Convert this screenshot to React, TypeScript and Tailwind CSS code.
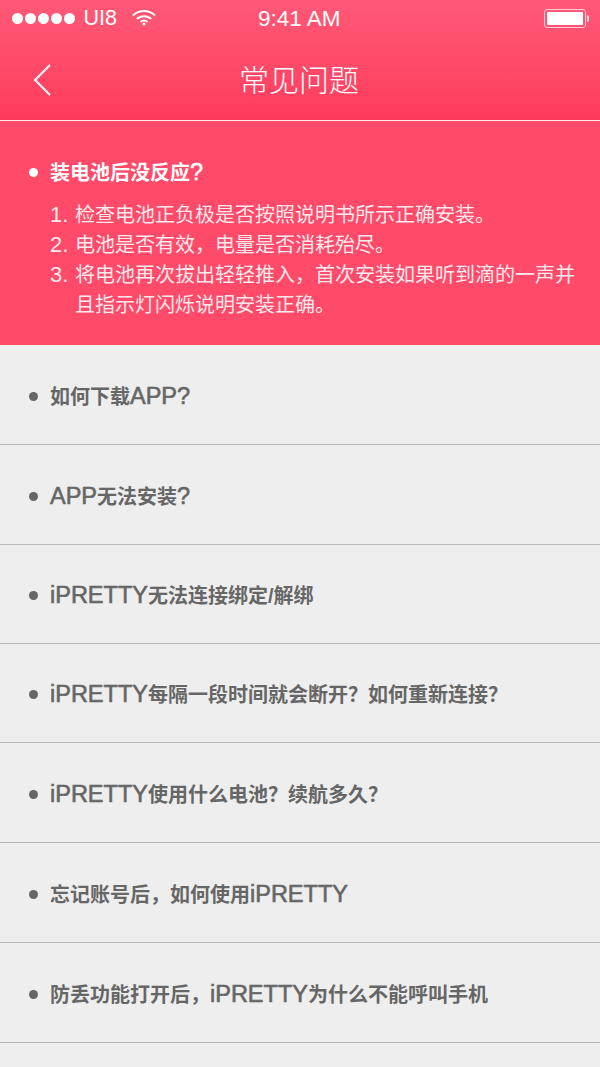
import type { FC } from "react";

const questions = [
  "如何下载APP?",
  "APP无法安装?",
  "iPRETTY无法连接绑定/解绑",
  "iPRETTY每隔一段时间就会断开\uFF1F如何重新连接\uFF1F",
  "iPRETTY使用什么电池\uFF1F续航多久\uFF1F",
  "忘记账号后\uFF0C如何使用iPRETTY",
  "防丢功能打开后\uFF0CiPRETTY为什么不能呼叫手机",
];

const rowHeights = ["h-[100px]", "h-[100px]", "h-[99px]", "h-[99px]", "h-[100px]", "h-[100px]", "h-[100px]"];

// latin runs are set larger than the chinese text in the design
const Mixed: FC<{ text: string }> = ({ text }) => (
  <>
    {text.split(/([A-Za-z?]+)/).map((part, i) =>
      /[A-Za-z?]/.test(part) ? (
        <span key={i} className="text-[23.500px] leading-[28px] font-normal [-webkit-text-stroke:0.6px_#666666]">
          {part}
        </span>
      ) : (
        <span key={i}>{part}</span>
      ),
    )}
  </>
);

const StatusBar: FC = () => (
  <div className="relative flex h-[37px] items-center pl-3 pr-[10px] font-light text-white">
    <div className="flex gap-[2.500px]">
      {[0, 1, 2, 3, 4].map((i) => (
        <span key={i} className="h-[10.500px] w-[10.500px] rounded-full bg-white" />
      ))}
    </div>
    <span className="ml-[9px] text-[21.500px] leading-none">UI8</span>
    <svg className="ml-[15px] -mt-[3px]" width="24" height="17" viewBox="0 0 24 17" fill="none" stroke="white" strokeWidth="2">
      <path d="M1 6.500C7 .6 17 .6 23 6.500" />
      <path d="M4.800 10C8.800 6.200 15.200 6.200 19.200 10" />
      <path d="M8.500 13C10.500 11.300 13.500 11.300 15.500 13" />
      <circle cx="12" cy="15.200" r="1.400" fill="white" stroke="none" />
    </svg>
    <span className="absolute left-[258px] top-[6px] text-[22.500px] leading-[25px]">9:41 AM</span>
    <div className="ml-auto flex items-center">
      <div className="h-[19px] w-[42px] rounded-[3px] border border-white/70 p-[2px]">
        <div className="h-full w-full rounded-[1px] bg-white" />
      </div>
      <div className="ml-[1px] mr-[1px] h-[7px] w-[2px] rounded-r-sm bg-white/80" />
    </div>
  </div>
);

const App: FC = () => {
  return (
    <div className="flex h-[1067px] w-[600px] flex-col overflow-hidden bg-[#eeeeee] font-['Liberation_Sans','Noto_Sans_CJK_SC',sans-serif]">
      <header className="h-[120px] bg-linear-to-b from-[#ff5977] to-[#ff3a5c]">
        <StatusBar />
        <div className="relative flex h-[83px] items-center justify-center">
          <svg className="absolute left-[33px] top-[27px]" width="18" height="32" viewBox="0 0 18 32" fill="none" stroke="white" strokeWidth="2">
            <path d="M17 1 2 16l15 15" />
          </svg>
          <h1 className="mt-[5px] mr-[2px] text-[30px] leading-none font-light text-white">常见问题</h1>
        </div>
      </header>
      <div className="h-px bg-[#ffe9ed]" />

      <section className="h-[224px] bg-[#ff4a69] pl-[29px] pr-[25px] pt-[37px] text-white">
        <div className="flex h-[28px] items-center gap-[12px]">
          <span className="h-[9px] w-[9px] rounded-full bg-white" />
          <h2 className="text-[20px] leading-[28px] font-bold">
            装电池后没反应<span className="text-[23.500px] font-normal [-webkit-text-stroke:0.5px_white]">?</span>
          </h2>
        </div>
        <ol className="mt-[14px] pl-[21px] text-[20px] leading-[30px] text-[#ffe8ec]">
          <li className="flex"><span className="w-[25px] shrink-0 text-[22px]">1.</span><span>{"检查电池正负极是否按照说明书所示正确安装\u3002"}</span></li>
          <li className="flex"><span className="w-[25px] shrink-0 text-[22px]">2.</span><span>{"电池是否有效\uFF0C电量是否消耗殆尽\u3002"}</span></li>
          <li className="flex"><span className="w-[25px] shrink-0 text-[22px]">3.</span><span>{"将电池再次拔出轻轻推入\uFF0C首次安装如果听到滴的一声并且指示灯闪烁说明安装正确\u3002"}</span></li>
        </ol>
      </section>

      <ul>
        {questions.map((q, i) => (
          <li key={q} className={`flex items-center gap-[12px] border-b border-[#b9b9b9] pl-[29px] pt-[3px] ${rowHeights[i]}`}>
            <span className="h-[9px] w-[9px] rounded-full bg-[#666666]" />
            <span className="text-[20px] leading-[28px] font-bold text-[#666666]">
              <Mixed text={q} />
            </span>
          </li>
        ))}
      </ul>
    </div>
  );
};

export default App;
